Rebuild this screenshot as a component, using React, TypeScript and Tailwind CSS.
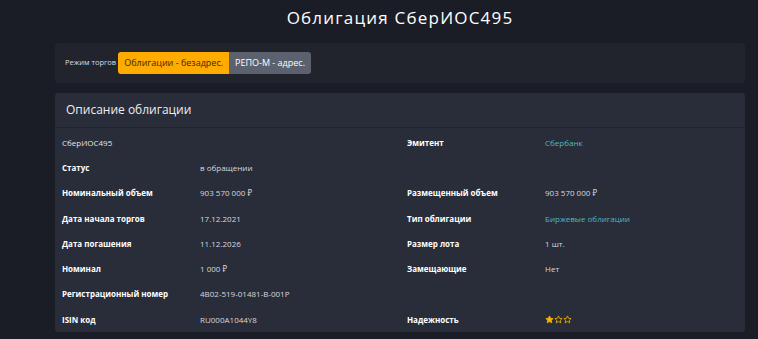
import React from "react";

type Cell = { label?: string; value?: React.ReactNode; plain?: string };

const rows: [Cell, Cell][] = [
  [{ plain: "СберИОС495" }, { label: "Эмитент", value: <span className="text-[#4fb8c4]">Сбербанк</span> }],
  [{ label: "Статус", value: "в обращении" }, {}],
  [{ label: "Номинальный объем", value: "903 570 000 ₽" }, { label: "Размещенный объем", value: "903 570 000 ₽" }],
  [{ label: "Дата начала торгов", value: "17.12.2021" }, { label: "Тип облигации", value: <span className="text-[#4fb8c4]">Биржевые облигации</span> }],
  [{ label: "Дата погашения", value: "11.12.2026" }, { label: "Размер лота", value: "1 шт." }],
  [{ label: "Номинал", value: "1 000 ₽" }, { label: "Замещающие", value: "Нет" }],
  [{ label: "Регистрационный номер", value: "4B02-519-01481-B-001P" }, {}],
  [{ label: "ISIN код", value: "RU000A1044Y8" }, { label: "Надежность", value: <Stars filled={1} /> }],
];

function Star({ filled }: { filled: boolean }) {
  return (
    <svg width="9" height="9" viewBox="0 0 24 24">
      <path
        d="M12 2.5l2.9 6.3 6.8.7-5.1 4.6 1.5 6.8L12 17.4l-6.1 3.5 1.5-6.8-5.1-4.6 6.8-.7z"
        fill={filled ? "#f5b400" : "none"}
        stroke="#f5b400"
        strokeWidth="2.2"
        strokeLinejoin="round"
      />
    </svg>
  );
}

function Stars({ filled }: { filled: number }) {
  return (
    <span className="flex items-center">
      {[0, 1, 2].map((i) => (
        <Star key={i} filled={i < filled} />
      ))}
    </span>
  );
}

function Half({ cell }: { cell: Cell }) {
  if (cell.plain) {
    return <div className="flex-1 flex items-center pl-[7px] text-[#e6e7ea]">{cell.plain}</div>;
  }
  return (
    <div className="flex-1 flex items-center pl-[7px]">
      <div className="w-[138px] font-bold text-white">{cell.label}</div>
      <div className="text-[#d7d9de]">{cell.value}</div>
    </div>
  );
}

export default function App() {
  return (
    <div
      className="min-h-[339px] w-full bg-[#1b1d26] overflow-hidden"
      style={{ fontFamily: '"Open Sans", "Noto Sans", sans-serif' }}
    >
      <div className="mx-[55px] w-[690px]">
        <h1 className="text-center text-white text-[17px] tracking-[1.2px] pt-[4px] h-[43px] leading-[28px]">
          Облигация СберИОС495
        </h1>
        <div className="bg-[#21232d] rounded-[3px] h-[40px] flex items-center px-[10px]">
          <span className="text-[7.5px] text-[#dcdde2] mr-[2px]">Режим торгов</span>
          <div className="flex h-[22px] rounded-[3px] overflow-hidden text-[9px]">
            <span className="bg-[#ffab00] text-[#3a2a05] px-[6px] flex items-center">Облигации - безадрес.</span>
            <span className="bg-[#5b616e] text-white px-[6px] flex items-center">РЕПО-М - адрес.</span>
          </div>
        </div>
        <div className="mt-[10px] bg-[#292c39] rounded-[3px] h-[239px]">
          <div className="h-[35px] border-b border-[#22252f] flex items-center pl-[11px] text-[12px] text-[#eceef1]">
            Описание облигации
          </div>
          <div className="pt-[2px] text-[8px]">
            {rows.map((r, i) => (
              <div key={i} className="flex h-[25.3px]">
                <Half cell={r[0]} />
                <Half cell={r[1]} />
              </div>
            ))}
          </div>
        </div>
      </div>
    </div>
  );
}
